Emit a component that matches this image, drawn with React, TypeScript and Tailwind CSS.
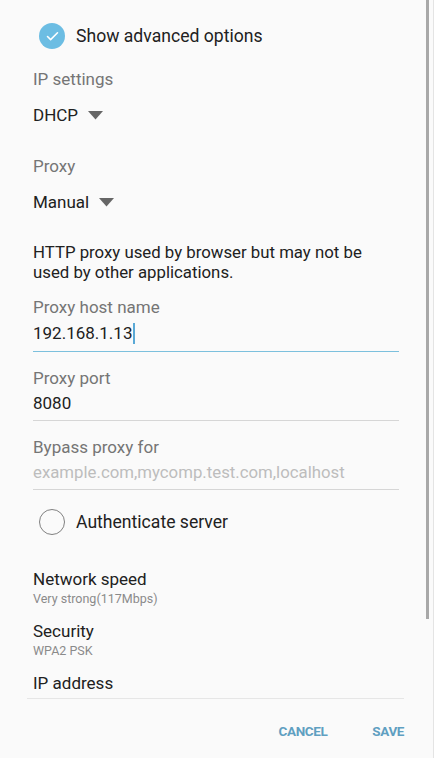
import { Check } from "lucide-react";

const font = { fontFamily: "Roboto, 'Noto Sans', sans-serif" };

function Caret() {
  return (
    <svg width="15" height="9" viewBox="0 0 15 9" className="ml-[10px]">
      <path d="M0 0 L15 0 L7.5 8.5 Z" fill="#666666" />
    </svg>
  );
}

export default function App() {
  return (
    <div
      className="relative h-[758px] w-[434px] overflow-hidden bg-[#fafafa] text-[#212121]"
      style={font}
    >
      {/* scrollbar */}
      <div className="absolute right-[5px] top-0 h-[619px] w-[3px] bg-[#a8a8a8]" />
      <div className="absolute right-0 top-0 h-full w-px bg-[#e4e4e4]" />

      <div className="px-[33px] pt-[14px] pr-[35px]">
        {/* Show advanced options */}
        <div className="flex h-[44px] items-center">
          <div className="ml-[6px] flex h-[26px] w-[26px] items-center justify-center rounded-full bg-[#6cbde3]">
            <Check className="h-[15px] w-[15px] text-white" strokeWidth={2.5} />
          </div>
          <span className="ml-[11px] text-[17.6px]">Show advanced options</span>
        </div>

        <div className="mt-[10px] h-[22px] text-[17px] leading-[22px] text-[#757575]">IP settings</div>
        <div className="mt-[14px] flex h-[22px] items-center text-[17px] leading-[22px]">
          DHCP <Caret />
        </div>

        <div className="mt-[29px] h-[22px] text-[17px] leading-[22px] text-[#757575]">Proxy</div>
        <div className="mt-[14px] flex h-[22px] items-center text-[17px] leading-[22px]">
          Manual <Caret />
        </div>

        <p className="mt-[29px] text-[16.8px] leading-[20px]">
          HTTP proxy used by browser but may not be used by other applications.
        </p>

        {/* host name */}
        <div className="mt-[14px] h-[22px] text-[17px] leading-[22px] text-[#757575]">Proxy host name</div>
        <div className="mt-[4px] border-b-[1.5px] border-[#7cc0dd] pb-[7px]">
          <div className="flex h-[22px] items-center text-[17px] leading-[22px]">
            192.168.1.13
            <span className="ml-px h-[21px] w-[2px] bg-[#5aa9d6]" />
          </div>
        </div>

        {/* port */}
        <div className="mt-[15px] h-[22px] text-[17px] leading-[22px] text-[#757575]">Proxy port</div>
        <div className="mt-[3px] border-b border-[#d6d6d6] pb-[6px]">
          <div className="h-[22px] text-[17px] leading-[22px]">8080</div>
        </div>

        {/* bypass */}
        <div className="mt-[15px] h-[22px] text-[17px] leading-[22px] text-[#757575]">Bypass proxy for</div>
        <div className="mt-[3px] border-b border-[#d6d6d6] pb-[6px]">
          <div className="h-[22px] text-[16.8px] leading-[22px] text-[#bdbdbd]">
            example.com,mycomp.test.com,localhost
          </div>
        </div>

        {/* authenticate */}
        <div className="mt-[10px] flex h-[44px] items-center">
          <div className="ml-[6px] h-[26px] w-[26px] rounded-full border-[1.5px] border-[#808080]" />
          <span className="ml-[11px] text-[17.6px]">Authenticate server</span>
        </div>

        <div className="mt-[24px] h-[22px] text-[17px] leading-[22px]">Network speed</div>
        <div className="mt-px h-[16px] text-[12.5px] leading-[16px] text-[#8a8a8a]">Very strong(117Mbps)</div>

        <div className="mt-[13px] h-[22px] text-[17px] leading-[22px]">Security</div>
        <div className="mt-px h-[16px] text-[12.5px] leading-[16px] text-[#8a8a8a]">WPA2 PSK</div>

        <div className="mt-[13px] h-[22px] text-[17px] leading-[22px]">IP address</div>
      </div>

      <div className="mx-[27px] mt-[4px] h-px w-[377px] bg-[#e6e6e6]" />

      {/* buttons */}
      <div className="mt-[22px] flex justify-end gap-[45px] pr-[30px] text-[13.5px] font-bold tracking-[-0.4px] text-[#5f9fc1]">
        <span>CANCEL</span>
        <span>SAVE</span>
      </div>
    </div>
  );
}
